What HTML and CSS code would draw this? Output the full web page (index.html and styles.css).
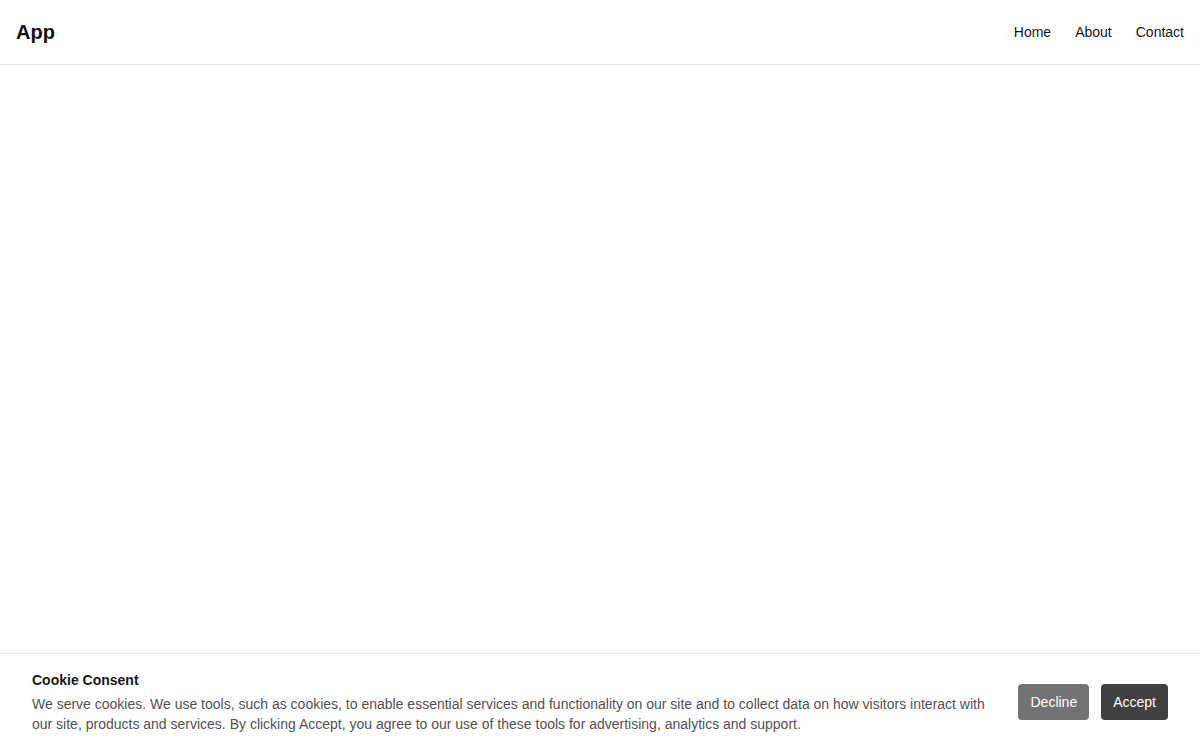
FILE: index.html
```html
<!DOCTYPE html>
<html lang="en">
<head>
<meta charset="utf-8">
<title>App</title>
<link rel="stylesheet" href="styles.css">
</head>
<body>
<header class="header">
  <div class="logo">App</div>
  <nav class="nav">
    <a href="#">Home</a>
    <a href="#">About</a>
    <a href="#">Contact</a>
  </nav>
</header>
<main class="main"></main>
<div class="cookie">
  <div class="cookie-text">
    <div class="cookie-title">Cookie Consent</div>
    <p class="cookie-body">We serve cookies. We use tools, such as cookies, to enable essential services and functionality on our site and to collect data on how visitors interact with our site, products and services. By clicking Accept, you agree to our use of these tools for advertising, analytics and support.</p>
  </div>
  <div class="cookie-actions">
    <button class="btn btn-decline">Decline</button>
    <button class="btn btn-accept">Accept</button>
  </div>
</div>
</body>
</html>
```

FILE: styles.css
```css
* { box-sizing: border-box; }
html, body { margin: 0; padding: 0; height: 100%; }
body {
  font-family: "Liberation Sans", Arial, sans-serif;
  color: #171717;
  background: #fff;
}
.header {
  height: 65px;
  display: flex;
  align-items: center;
  justify-content: space-between;
  padding: 0 16px;
  border-bottom: 1px solid #e5e5e5;
}
.logo {
  font-size: 20px;
  font-weight: 700;
  color: #111;
}
.nav {
  display: flex;
  gap: 24px;
}
.nav a {
  font-size: 14px;
  color: #171717;
  text-decoration: none;
}
.cookie {
  position: fixed;
  left: 0;
  right: 0;
  bottom: 0;
  background: #fff;
  border-top: 1px solid #e5e5e5;
  padding: 16px 32px;
  display: flex;
  align-items: center;
  gap: 32px;
}
.cookie-text { flex: 1; }
.cookie-title {
  font-size: 14px;
  font-weight: 700;
  line-height: 20px;
  color: #171717;
  margin-bottom: 4px;
}
.cookie-body {
  margin: 0;
  font-size: 14px;
  line-height: 20px;
  color: #525252;
}
.cookie-actions {
  display: flex;
  gap: 12px;
  flex-shrink: 0;
}
.btn {
  font-family: inherit;
  font-size: 14px;
  line-height: 20px;
  padding: 8px 12px;
  border: none;
  border-radius: 4px;
  color: #fff;
  cursor: pointer;
}
.btn-decline { background: #737373; }
.btn-accept { background: #404040; }
```
